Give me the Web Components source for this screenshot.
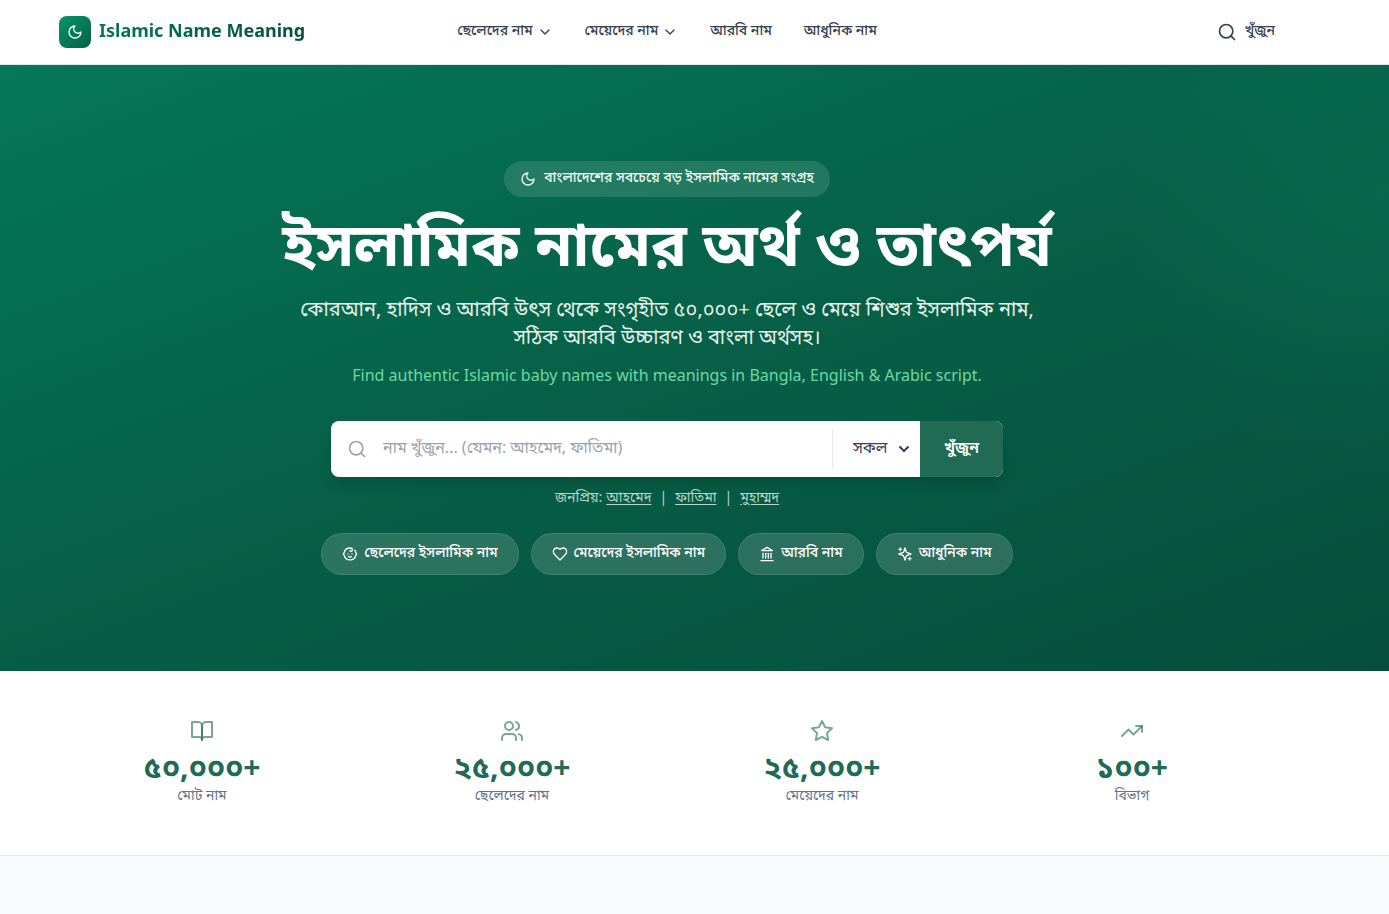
<!DOCTYPE html>
<html lang="bn">
<head>
<meta charset="utf-8">
<meta name="viewport" content="width=device-width, initial-scale=1">
<title>Islamic Name Meaning</title>
<style>
  :root { --gutter-end: 55px; --brand: #1f6b54; }
  body {
    margin: 0;
    background: #fafbfe;
    color: #374151;
    font: 16px/24px "Noto Sans", "Noto Sans Bengali", sans-serif;
  }
</style>
</head>
<body>
<site-header></site-header>
<main>
  <hero-section></hero-section>
  <stats-band>
    <stat-item icon="book" value="৫০,০০০+">মোট নাম</stat-item>
    <stat-item icon="users" value="২৫,০০০+">ছেলেদের নাম</stat-item>
    <stat-item icon="star" value="২৫,০০০+">মেয়েদের নাম</stat-item>
    <stat-item icon="trend" value="১০০+">বিভাগ</stat-item>
  </stats-band>
</main>
<script>
const ICONS = {
  moon: '<path d="M12 3a6 6 0 0 0 9 9 9 9 0 1 1-9-9Z"/>',
  down: '<path d="m6 9 6 6 6-6"/>',
  search: '<circle cx="11" cy="11" r="8"/><path d="m21 21-4.300-4.300"/>',
  baby: '<path d="M9 12h.01"/><path d="M15 12h.01"/><path d="M10 16c.5.3 1.200.5 2 .5s1.500-.2 2-.5"/><path d="M19 6.300a9 9 0 0 1 1.800 3.900 2 2 0 0 1 0 3.600 9 9 0 0 1-17.600 0 2 2 0 0 1 0-3.600A9 9 0 0 1 12 3c2 0 3.500 1.100 3.500 2.500s-.9 2.500-2 2.500c-.8 0-1.500-.4-1.500-1"/>',
  heart: '<path d="M19 14c1.490-1.460 3-3.210 3-5.500A5.500 5.500 0 0 0 16.500 3c-1.760 0-3 .5-4.500 2-1.500-1.500-2.740-2-4.500-2A5.500 5.500 0 0 0 2 8.500c0 2.300 1.500 4.050 3 5.500l7 7Z"/>',
  landmark: '<path d="M3 22h18"/><path d="M6 18v-7"/><path d="M10 18v-7"/><path d="M14 18v-7"/><path d="M18 18v-7"/><path d="m12 2 8 5H4Z"/>',
  sparkles: '<path d="m12 3-1.912 5.813a2 2 0 0 1-1.275 1.275L3 12l5.813 1.912a2 2 0 0 1 1.275 1.275L12 21l1.912-5.813a2 2 0 0 1 1.275-1.275L21 12l-5.813-1.912a2 2 0 0 1-1.275-1.275L12 3Z"/><path d="M5 3v4"/><path d="M19 17v4"/><path d="M3 5h4"/><path d="M17 19h4"/>',
  book: '<path d="M2 3h6a4 4 0 0 1 4 4v14a3 3 0 0 0-3-3H2z"/><path d="M22 3h-6a4 4 0 0 0-4 4v14a3 3 0 0 1 3-3h7z"/>',
  users: '<path d="M16 21v-2a4 4 0 0 0-4-4H6a4 4 0 0 0-4 4v2"/><circle cx="9" cy="7" r="4"/><path d="M22 21v-2a4 4 0 0 0-3-3.870"/><path d="M16 3.130a4 4 0 0 1 0 7.750"/>',
  star: '<path d="m12 2 3.090 6.260L22 9.270l-5 4.870 1.180 6.880L12 17.770l-6.180 3.250L7 14.140 2 9.270l6.910-1.010L12 2z"/>',
  trend: '<path d="m22 7-8.500 8.500-5-5L2 17"/><path d="M16 7h6v6"/>'
};

const define = (name, render) => customElements.define(name, class extends HTMLElement {
  connectedCallback() {
    if (this.shadowRoot) return;
    this.attachShadow({ mode: 'open' }).innerHTML = render(this);
  }
});

define('line-icon', el => `
  <style>
    :host { display: inline-block; flex: none; width: var(--size, 16px); height: var(--size, 16px); }
    svg { display: block; width: 100%; height: 100%; fill: none; stroke: currentColor;
          stroke-width: 2; stroke-linecap: round; stroke-linejoin: round; }
  </style>
  <svg viewBox="0 0 24 24" aria-hidden="true">${ICONS[el.getAttribute('name')]}</svg>`);

define('site-header', () => `
  <style>
    :host { display: block; background: #fff; border-bottom: 1px solid #e5e7eb; padding-right: var(--gutter-end); }
    .bar { box-sizing: border-box; max-width: 1280px; height: 64px; margin: 0 auto; padding: 0 32px;
           display: grid; grid-template-columns: 1fr auto 1fr; align-items: center; }
    a { color: inherit; text-decoration: none; }
    .logo { display: flex; align-items: center; gap: 8px; justify-self: start; font-size: 18px; line-height: 28px; font-weight: 700; }
    .mark { width: 32px; height: 32px; border-radius: 8px; display: grid; place-items: center; color: #fff;
            background: linear-gradient(to bottom right, #059669, #065f46); }
    .name { background: linear-gradient(to right, #047857, #064e3b); -webkit-background-clip: text; background-clip: text; color: transparent; padding-bottom: 4px; }
    nav { display: flex; gap: 32px; }
    nav a, .find { display: flex; align-items: center; gap: 4px; font-size: 14px; line-height: 20px; font-weight: 500; }
    .find { gap: 8px; justify-self: end; --size: 20px; border: 0; padding: 0; background: none; color: inherit; font-family: inherit; }
    .t { padding-bottom: 4px; }
  </style>
  <header class="bar">
    <a class="logo" href="#"><span class="mark"><line-icon name="moon"></line-icon></span><span class="name">Islamic Name Meaning</span></a>
    <nav>
      <a href="#boys"><span class="t">ছেলেদের নাম</span><line-icon name="down"></line-icon></a>
      <a href="#girls"><span class="t">মেয়েদের নাম</span><line-icon name="down"></line-icon></a>
      <a href="#arabic"><span class="t">আরবি নাম</span></a>
      <a href="#modern"><span class="t">আধুনিক নাম</span></a>
    </nav>
    <button class="find" type="button"><line-icon name="search"></line-icon><span class="t">খুঁজুন</span></button>
  </header>`);

define('pill-link', el => `
  <style>
    :host { display: block; }
    a { display: flex; align-items: center; gap: 6px; padding: 10px 20px; border: 1px solid rgb(255 255 255 / .1);
        border-radius: 9999px; background: rgb(255 255 255 / .15); color: #fff; text-decoration: none;
        font-size: 14px; line-height: 20px; font-weight: 500; }
    span { padding-bottom: 2px; margin-top: -2px; }
  </style>
  <a href="${el.getAttribute('href')}"><line-icon name="${el.getAttribute('icon')}"></line-icon><span><slot></slot></span></a>`);

define('name-search', () => `
  <style>
    :host { display: block; width: 100%; max-width: 672px; }
    form { display: flex; height: 56px; border-radius: 8px; overflow: hidden; background: #fff;
           box-shadow: 0 10px 15px -3px rgb(0 0 0 / .1), 0 4px 6px -4px rgb(0 0 0 / .1); }
    .field { flex: 1; display: flex; align-items: center; gap: 16px; padding-left: 16px; color: #9ca3af; --size: 20px; }
    input, select, button { font: inherit; border: 0; outline: 0; margin: 0; }
    input { flex: 1; min-width: 0; height: 52px; padding: 0 0 4px; background: none; color: #374151; }
    input::placeholder { color: #9ca3af; opacity: 1; }
    .scope { position: relative; display: flex; align-items: center; margin: 8px 0; border-left: 1px solid #e2e8f0; color: #374151; }
    select { appearance: none; width: 87px; height: 40px; padding: 0 32px 4px 20px; background: none; color: inherit; }
    svg { position: absolute; right: 10px; top: 14px; width: 12px; height: 12px; fill: none; stroke: currentColor; stroke-width: 2; stroke-linecap: round; pointer-events: none; }
    button { padding: 0 24px 4px; background: #216b55; color: #fff; font-weight: 600; }
    .scope, button { flex: none; }
  </style>
  <form onsubmit="return false">
    <div class="field"><line-icon name="search"></line-icon><input type="text" aria-label="নাম খুঁজুন" placeholder="নাম খুঁজুন... (যেমন: আহমেদ, ফাতিমা)"></div>
    <div class="scope"><select aria-label="বিভাগ"><option>সকল</option></select><svg viewBox="0 0 12 12" aria-hidden="true"><path d="m2 4 4 4 4-4"/></svg></div>
    <button type="submit">খুঁজুন</button>
  </form>`);

define('hero-section', () => `
  <style>
    :host { display: block; padding: 96px var(--gutter-end) 96px 0; color: #fff;
            background: radial-gradient(ellipse 270px 280px at 100% 22%, rgb(16 185 129 / .12), transparent),
                        linear-gradient(160deg, #047857, #065f46 50%, #064e3b); }
    .inner { display: flex; flex-direction: column; align-items: center; text-align: center; max-width: 896px; margin: 0 auto; }
    .badge { display: flex; align-items: center; gap: 8px; padding: 8px 16px; border-radius: 9999px;
             background: rgb(255 255 255 / .12); font-size: 14px; line-height: 20px; font-weight: 500; color: #ecfdf5; }
    .badge span { padding-bottom: 2px; margin-top: -2px; }
    h1 { margin: 16px 0 0; font-size: 60px; line-height: 60px; font-weight: 700; }
    .lead { margin: 22px 0 0; max-width: 768px; font-size: 20px; line-height: 28px; color: #e5f2ec; }
    .en { margin: 12px 0 34px; color: #6ed8a4; }
    .popular { margin: 10px 0 26px; display: flex; font-size: 14px; line-height: 20px; color: #b9d5ca; }
    .popular a { color: inherit; text-underline-offset: 2px; margin-left: 4px; }
    .popular i { font-style: normal; margin: 0 4px 0 8px; }
    .pills { display: flex; flex-wrap: wrap; justify-content: center; gap: 12px; }
  </style>
  <section class="inner">
    <div class="badge"><line-icon name="moon"></line-icon><span>বাংলাদেশের সবচেয়ে বড় ইসলামিক নামের সংগ্রহ</span></div>
    <h1>ইসলামিক নামের অর্থ ও তাৎপর্য</h1>
    <p class="lead">কোরআন, হাদিস ও আরবি উৎস থেকে সংগৃহীত ৫০,০০০+ ছেলে ও মেয়ে শিশুর ইসলামিক নাম, সঠিক আরবি উচ্চারণ ও বাংলা অর্থসহ।</p>
    <p class="en">Find authentic Islamic baby names with meanings in Bangla, English &amp; Arabic script.</p>
    <name-search></name-search>
    <div class="popular">জনপ্রিয়: <a href="#ahmed">আহমেদ</a><i>|</i><a href="#fatima">ফাতিমা</a><i>|</i><a href="#muhammad">মুহাম্মদ</a></div>
    <div class="pills">
      <pill-link icon="baby" href="#boys">ছেলেদের ইসলামিক নাম</pill-link>
      <pill-link icon="heart" href="#girls">মেয়েদের ইসলামিক নাম</pill-link>
      <pill-link icon="landmark" href="#arabic">আরবি নাম</pill-link>
      <pill-link icon="sparkles" href="#modern">আধুনিক নাম</pill-link>
    </div>
  </section>`);

define('stats-band', () => `
  <style>
    :host { display: block; background: #fff; border-bottom: 1px solid #e5e7eb; padding: 48px var(--gutter-end) 50px 0; }
    .grid { box-sizing: border-box; display: grid; grid-template-columns: repeat(4, 1fr); gap: 24px; max-width: 1280px; margin: 0 auto; padding: 0 32px; }
  </style>
  <section class="grid"><slot></slot></section>`);

define('stat-item', el => `
  <style>
    :host { display: flex; flex-direction: column; align-items: center; text-align: center; --size: 24px; }
    line-icon { color: rgb(31 107 84 / .6); }
    strong { margin-top: 6px; font-size: 30px; line-height: 36px; font-weight: 700; color: var(--brand); }
    span { font-size: 14px; line-height: 20px; color: #64748b; }
  </style>
  <line-icon name="${el.getAttribute('icon')}"></line-icon>
  <strong>${el.getAttribute('value')}</strong>
  <span><slot></slot></span>`);
</script>
</body>
</html>
